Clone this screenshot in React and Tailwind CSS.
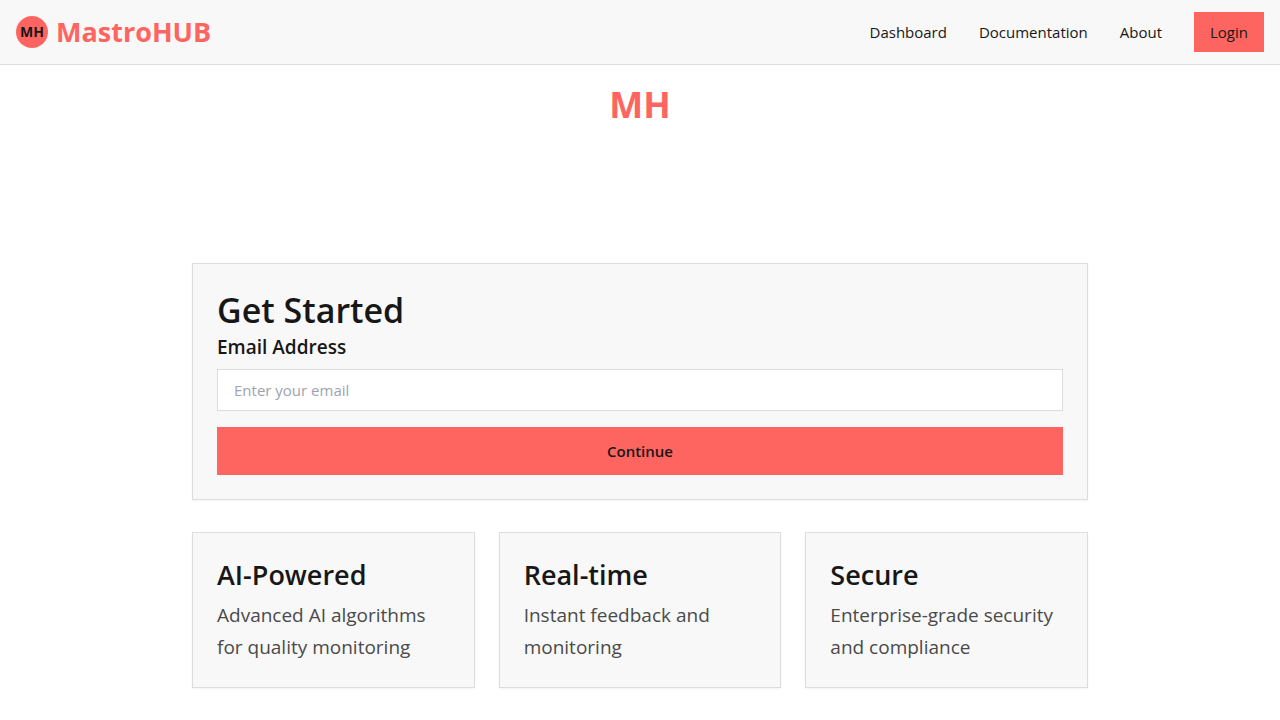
const features = [
  { title: "AI-Powered", text: "Advanced AI algorithms for quality monitoring" },
  { title: "Real-time", text: "Instant feedback and monitoring" },
  { title: "Secure", text: "Enterprise-grade security and compliance" },
];

function Header() {
  return (
    <header className="flex items-center justify-between border-b border-[#dddddd] bg-[#f8f8f8] px-4 py-3">
      <a href="#home" className="flex items-center gap-2">
        <span className="flex size-8 items-center justify-center rounded-full bg-[#ff6560] text-[14px] font-bold leading-5">
          MH
        </span>
        <span className="text-[27px] font-bold leading-9 text-[#ff6560]">MastroHUB</span>
      </a>
      <nav className="flex items-center gap-8 text-[15px] leading-6">
        <a href="#dashboard">Dashboard</a>
        <a href="#documentation">Documentation</a>
        <a href="#about">About</a>
        <button type="button" className="bg-[#ff6560] px-4 py-2">
          Login
        </button>
      </nav>
    </header>
  );
}

function SignupCard() {
  return (
    <form
      className="border border-[#dddddd] bg-[#f8f8f8] p-6 shadow-xs"
      onSubmit={(e) => e.preventDefault()}
    >
      <h2 className="text-[34px] font-semibold leading-[45px]">Get Started</h2>
      <label htmlFor="email" className="mb-2 block text-[19px] font-semibold leading-7">
        Email Address
      </label>
      <input
        id="email"
        type="email"
        placeholder="Enter your email"
        className="block w-full border border-[#dddddd] bg-white px-4 py-2 text-[15px] leading-6 placeholder:text-[#9ca3af]"
      />
      <button
        type="submit"
        className="mt-4 w-full bg-[#ff6560] py-3 text-[15px] font-semibold leading-6"
      >
        Continue
      </button>
    </form>
  );
}

export default function App() {
  return (
    <div className="min-h-screen bg-white font-['Open_Sans','Noto_Sans',sans-serif] text-[#171717]">
      <Header />
      <main className="mx-auto max-w-4xl pb-8">
        <h1 className="pt-4 pb-[134px] text-center text-[36px] font-bold leading-[48px] text-[#ff6560]">
          MH
        </h1>
        <SignupCard />
        <section className="mt-8 grid grid-cols-3 gap-6">
          {features.map((f) => (
            <article key={f.title} className="border border-[#dddddd] bg-[#f8f8f8] p-6 shadow-xs">
              <h3 className="mb-1 text-[27px] font-semibold leading-9">{f.title}</h3>
              <p className="pt-0.5 text-[19px] leading-8 text-[#4a4a4a]">{f.text}</p>
            </article>
          ))}
        </section>
      </main>
    </div>
  );
}
